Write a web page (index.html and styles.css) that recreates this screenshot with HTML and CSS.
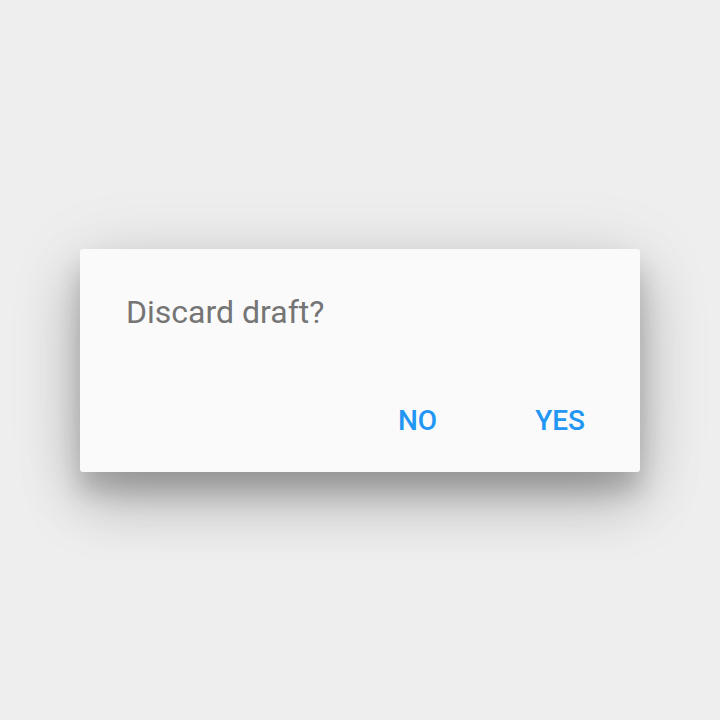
FILE: index.html
```html
<!DOCTYPE html>
<html lang="en">
<head>
<meta charset="utf-8">
<title>Discard draft?</title>
<link rel="stylesheet" href="styles.css">
</head>
<body>
<main class="stage">
  <div class="dialog" role="alertdialog" aria-labelledby="dlg-title">
    <p class="dialog-title" id="dlg-title">Discard draft?</p>
    <div class="dialog-actions">
      <button class="btn" type="button">NO</button>
      <button class="btn" type="button">YES</button>
    </div>
  </div>
</main>
</body>
</html>
```
FILE: styles.css
```css
html, body {
  margin: 0;
  height: 100%;
}

body {
  background: #eeeeee;
  font-family: Roboto, "Noto Sans", "Liberation Sans", sans-serif;
}

.stage {
  height: 100%;
  display: flex;
  align-items: center;
  justify-content: center;
}

.dialog {
  width: 560px;
  box-sizing: border-box;
  background: #fafafa;
  border-radius: 3px;
  padding: 44px 0 27px 46px;
  box-shadow:
    0 30px 60px rgba(0, 0, 0, 0.22),
    0 20px 24px rgba(0, 0, 0, 0.16),
    0 10px 80px rgba(0, 0, 0, 0.10);
}

.dialog-title {
  margin: 0 0 66px;
  font-size: 32px;
  line-height: 38px;
  font-weight: 400;
  color: #757575;
}

.dialog-actions {
  display: flex;
  justify-content: flex-end;
  padding-right: 31px;
  gap: 50px;
}

.btn {
  border: 0;
  background: transparent;
  padding: 0 24px;
  height: 48px;
  line-height: 48px;
  font-family: inherit;
  font-size: 28px;
  font-weight: 500;
  color: #2196f3;
  cursor: pointer;
}
```
